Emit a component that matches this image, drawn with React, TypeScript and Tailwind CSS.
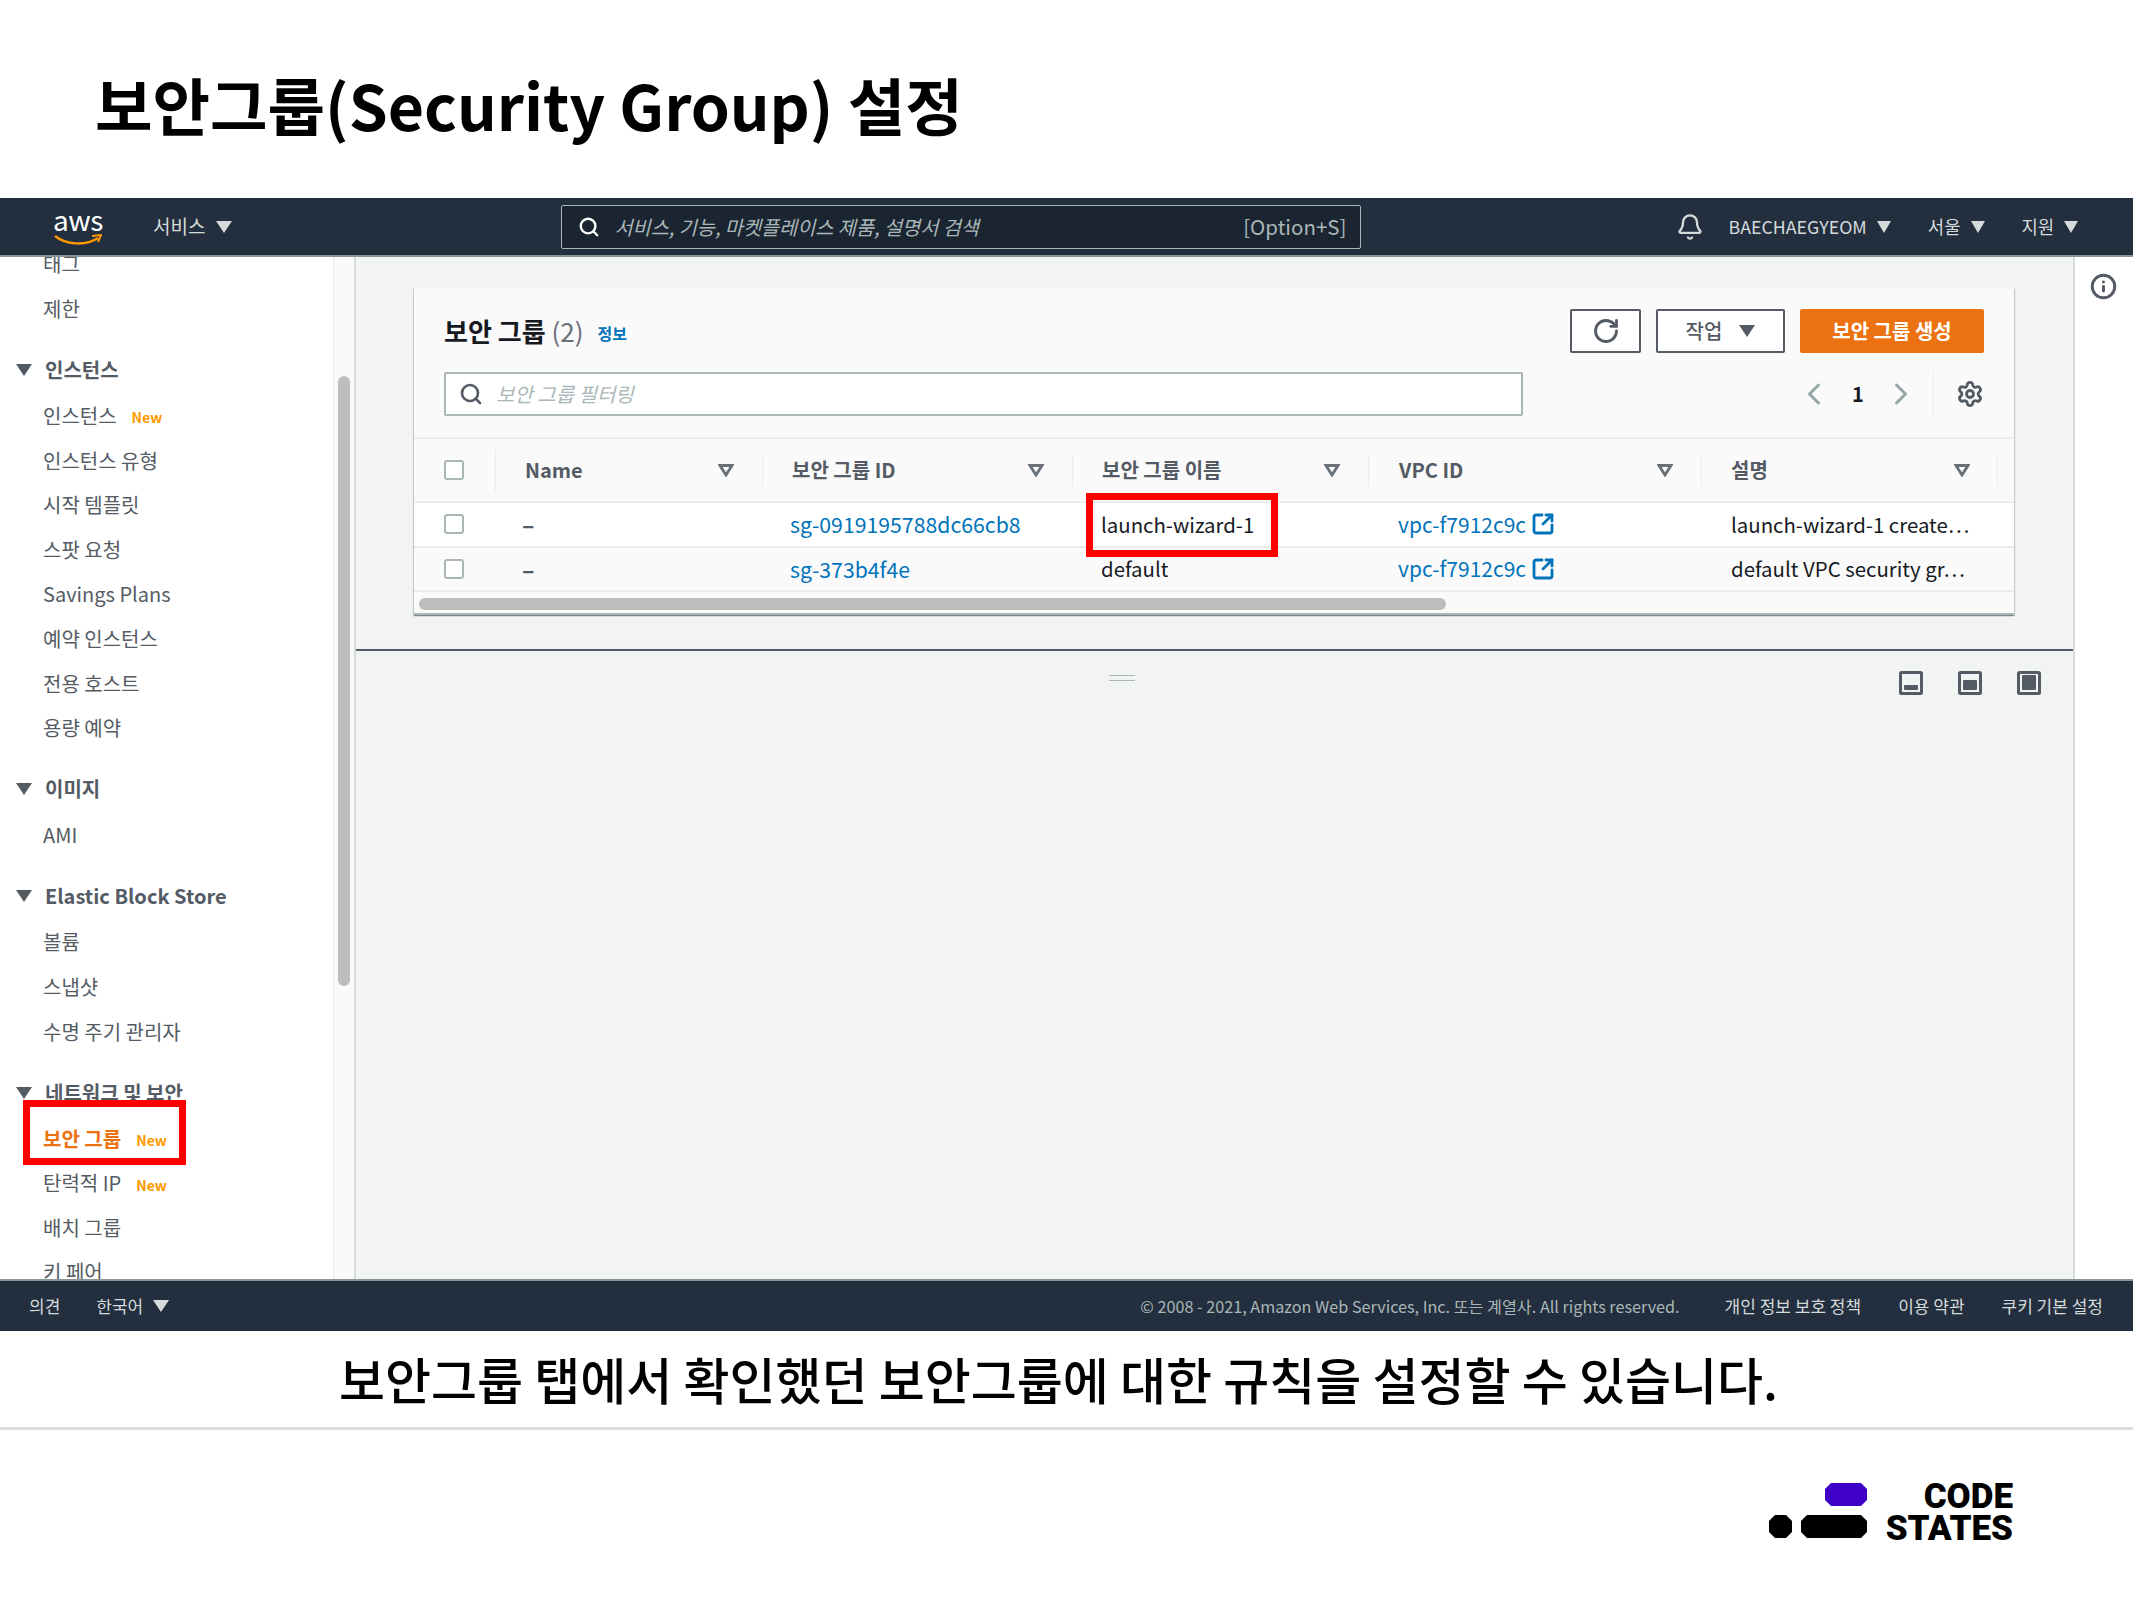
import { Bell, ChevronLeft, ChevronRight, Info, RotateCw, Search, Settings, SquareArrowOutUpRight } from "lucide-react";

const FONT = "font-['Noto_Sans_CJK_KR','Noto_Sans',sans-serif]";

// Solid caret used in the top bar, footer and sidebar
function Caret({ className }: { className?: string }) {
  return (
    <svg width="16" height="12" viewBox="0 0 16 12" preserveAspectRatio="none" className={className}>
      <polygon points="0,0 16,0 8,12" fill="currentColor" />
    </svg>
  );
}

// Outlined sort/filter triangle of the table header
function SortCaret() {
  return (
    <svg width="16" height="13" viewBox="0 0 16 13" className="text-[#687078]">
      <polygon points="2,1.5 14,1.5 8,11" fill="none" stroke="currentColor" strokeWidth="2.8" />
    </svg>
  );
}

function PanelIcon({ fill }: { fill: "low" | "mid" | "full" }) {
  const y = fill === "low" ? 14 : fill === "mid" ? 9 : 4;
  return (
    <svg width="24" height="24" viewBox="0 0 24 24" className="text-[#545b64]">
      <rect x="1.5" y="1.5" width="21" height="21" rx="1" fill="none" stroke="currentColor" strokeWidth="3" />
      <rect x="5" y={y} width="14" height={19 - y} rx="1" fill="currentColor" />
    </svg>
  );
}

function NavItem({ label, isNew, active }: { label: string; isNew?: boolean; active?: boolean }) {
  return (
    <div className={`h-[44.6px] flex items-center pl-[43px] text-[20px] ${active ? "text-[#ec7211] font-bold" : "text-[#545b64]"}`}>
      <span>{label}</span>
      {isNew && <span className="ml-[15px] mt-[4px] text-[14px] font-bold text-[#ff9900]">New</span>}
    </div>
  );
}

function NavHeader({ label }: { label: string }) {
  return (
    <div className="mt-[15px] h-[47.5px] flex items-center pl-[16px] gap-[13px] text-[20px] font-bold text-[#545b64]">
      <Caret />
      <span>{label}</span>
    </div>
  );
}

const COLUMNS = [
  { label: "Name", width: "w-[267px]", pad: "pl-[29px]", sort: "pr-[28px]" },
  { label: "보안 그룹 ID", width: "w-[310px]", pad: "pl-[29px]", sort: "pr-[28px]" },
  { label: "보안 그룹 이름", width: "w-[296px]", pad: "pl-[29px]", sort: "pr-[28px]" },
  { label: "VPC ID", width: "w-[333px]", pad: "pl-[30px]", sort: "pr-[28px]" },
  { label: "설명", width: "w-[296px]", pad: "pl-[29px]", sort: "pr-[27px]" },
];

const ROWS = [
  { id: "sg-0919195788dc66cb8", name: "launch-wizard-1", desc: "launch-wizard-1 create…", bg: "bg-white" },
  { id: "sg-373b4f4e", name: "default", desc: "default VPC security gr…", bg: "bg-[#fafafa]" },
];

function Checkbox() {
  return <div className="w-[20px] h-[20px] rounded-[3px] border-2 border-[#aab7b8] bg-white" />;
}

export default function App() {
  return (
    <div className={`relative w-[2133px] h-[1600px] bg-white flex flex-col overflow-hidden ${FONT}`}>
      {/* Slide title */}
      <div className="h-[198px] shrink-0 flex items-center pl-[95px] pt-[11px]">
        <h1 className="text-[62.5px] font-bold text-black leading-none">보안그룹(Security Group) 설정</h1>
      </div>

      {/* Console screenshot */}
      <div className="h-[1133px] shrink-0 flex flex-col">
        <header className="h-[59px] shrink-0 bg-[#232f3e] border-b-2 border-[#879596] flex items-center text-[#d5dbdb] text-[19px]">
          <div className="ml-[54px] w-[48px] h-[46px] flex flex-col items-center leading-none">
            <span className="text-[28px] text-white leading-[30px] tracking-[-0.5px]">aws</span>
            <svg width="48" height="12" viewBox="0 0 48 12">
              <path d="M1 2 C12 11 32 12 44 4" fill="none" stroke="#ff9900" strokeWidth="2.4" />
              <path d="M38 2 L47 1 L44 8" fill="none" stroke="#ff9900" strokeWidth="2" />
            </svg>
          </div>
          <span className="ml-[51px]">서비스</span>
          <Caret className="ml-[11px]" />
          <div className="ml-[329px] w-[800px] h-[44px] bg-[#1b2531] border border-[#aab7b8] rounded-[2px] flex items-center pl-[16px] pr-[14px]">
            <Search size={22} strokeWidth={2.6} className="text-white" />
            <span className="ml-[14px] italic text-[19.7px] text-[#aab7b8]">서비스, 기능, 마켓플레이스 제품, 설명서 검색</span>
            <span className="ml-auto text-[20.5px] text-[#aab7b8]">[Option+S]</span>
          </div>
          <Bell size={28} strokeWidth={2} className="ml-[315px]" />
          <span className="ml-[24px] text-[17.8px]">BAECHAEGYEOM</span>
          <Caret className="ml-[10px] w-[14px]" />
          <span className="ml-[37px] text-[17.8px]">서울</span>
          <Caret className="ml-[10px] w-[14px]" />
          <span className="ml-[37px] text-[17.8px]">지원</span>
          <Caret className="ml-[10px] w-[14px]" />
        </header>

        <div className="flex-1 min-h-0 flex overflow-hidden">
          {/* Sidebar */}
          <aside className="w-[333px] shrink-0 bg-white overflow-hidden">
            <div className="-mt-[15px]">
              <NavItem label="태그" />
              <NavItem label="제한" />
              <NavHeader label="인스턴스" />
              <NavItem label="인스턴스" isNew />
              <NavItem label="인스턴스 유형" />
              <NavItem label="시작 템플릿" />
              <NavItem label="스팟 요청" />
              <NavItem label="Savings Plans" />
              <NavItem label="예약 인스턴스" />
              <NavItem label="전용 호스트" />
              <NavItem label="용량 예약" />
              <NavHeader label="이미지" />
              <NavItem label="AMI" />
              <NavHeader label="Elastic Block Store" />
              <NavItem label="볼륨" />
              <NavItem label="스냅샷" />
              <NavItem label="수명 주기 관리자" />
              <NavHeader label="네트워크 및 보안" />
              <NavItem label="보안 그룹" isNew active />
              <NavItem label="탄력적 IP" isNew />
              <NavItem label="배치 그룹" />
              <NavItem label="키 페어" />
            </div>
          </aside>
          <div className="w-[23px] shrink-0 bg-[#fafafa] border-l border-r-2 border-l-[#eaeded] border-r-[#d5dbdb] pt-[119px] pl-[4px]">
            <div className="w-[12px] h-[610px] rounded-full bg-[#bdbdbd]" />
          </div>

          {/* Main content */}
          <main className="flex-1 min-w-0 bg-[#f2f3f3] flex flex-col">
            <div className="h-[394px] shrink-0 pt-[31px] pl-[58px] border-b-2 border-[#545b64]">
              <section className="w-[1600px] h-[327px] bg-[#fafafa] shadow-[0_1px_1px_0_rgba(0,28,36,0.3),1px_1px_1px_0_rgba(0,28,36,0.15),-1px_1px_1px_0_rgba(0,28,36,0.15)] border-b-2 border-[#aab7b8]">
                <div className="h-[84px] flex items-start pl-[30px] pr-[30px] pt-[21px]">
                  <h2 className="text-[26px] font-bold text-[#16191f] leading-[36px] mt-[4px]">
                    보안 그룹 <span className="font-normal text-[#687078]">(2)</span>
                  </h2>
                  <span className="ml-[14px] mt-[12px] text-[16px] font-bold text-[#0073bb]">정보</span>
                  <button className="ml-auto w-[71px] h-[44px] flex items-center justify-center bg-white border-2 border-[#545b64] rounded-[2px] text-[#545b64]">
                    <RotateCw size={28} strokeWidth={2.4} />
                  </button>
                  <button className="ml-[15px] w-[129px] h-[44px] flex items-center justify-center gap-[17px] bg-white border-2 border-[#545b64] rounded-[2px] text-[20px] font-medium text-[#545b64]">
                    작업
                    <Caret />
                  </button>
                  <button className="ml-[15px] w-[184px] h-[44px] flex items-center justify-center bg-[#ec7211] rounded-[2px] text-[20px] font-bold text-white">
                    보안 그룹 생성
                  </button>
                </div>
                <div className="h-[67px] flex items-start pl-[30px] border-b-2 border-[#eaeded]">
                  <div className="w-[1079px] h-[44px] bg-white border-2 border-[#aab7b8] rounded-[2px] flex items-center pl-[13px] gap-[13px]">
                    <Search size={24} strokeWidth={2.6} className="text-[#545b64]" />
                    <span className="italic text-[20px] text-[#aab7b8]">보안 그룹 필터링</span>
                  </div>
                  <div className="ml-[273px] h-[44px] flex items-center text-[#95a5a6]">
                    <ChevronLeft size={36} strokeWidth={2} />
                    <span className="ml-[16px] w-[20px] text-center text-[20px] font-bold text-[#16191f]">1</span>
                    <ChevronRight size={36} strokeWidth={2} className="ml-[15px]" />
                    <div className="ml-[14px] w-px h-[44px] bg-[#eaeded]" />
                    <Settings size={28} strokeWidth={2.4} className="ml-[22px] text-[#545b64]" />
                  </div>
                </div>

                {/* Table */}
                <div className="h-[64px] flex items-center border-b-2 border-[#eaeded]">
                  <div className="w-[82px] shrink-0 h-[42px] pl-[30px] flex items-center border-r border-[#eaeded]">
                    <Checkbox />
                  </div>
                  {COLUMNS.map((col) => (
                    <div
                      key={col.label}
                      className={`${col.width} shrink-0 h-[32px] flex items-center justify-between ${col.pad} ${col.sort} border-r border-[#eaeded] text-[20px] font-bold text-[#545b64]`}
                    >
                      <span>{col.label}</span>
                      <SortCaret />
                    </div>
                  ))}
                </div>
                {ROWS.map((row) => (
                  <div key={row.id} className={`h-[44.5px] flex items-center border-b-2 border-[#eaeded] text-[20.4px] text-[#16191f] ${row.bg}`}>
                    <div className="w-[82px] shrink-0 pl-[30px]">
                      <Checkbox />
                    </div>
                    <div className="w-[267px] shrink-0 pl-[26px] font-bold text-[23px] text-[#545b64]">–</div>
                    <div className="w-[310px] shrink-0 pl-[27px] text-[21.25px] text-[#0073bb]">{row.id}</div>
                    <div className="w-[296px] shrink-0 pl-[28px]">{row.name}</div>
                    <div className="w-[333px] shrink-0 pl-[29px] flex items-center gap-[5px] text-[21px] text-[#0073bb]">
                      vpc-f7912c9c
                      <SquareArrowOutUpRight size={24} strokeWidth={2.8} />
                    </div>
                    <div className="pl-[29px]">{row.desc}</div>
                  </div>
                ))}
                <div className="pt-[6px] pl-[5px]">
                  <div className="w-[1027px] h-[12px] rounded-full bg-[#bdbdbd]" />
                </div>
              </section>
            </div>

            {/* Split panel */}
            <div className="flex-1 flex flex-col">
              <div className="pt-[24px] pl-[753px]">
                <div className="w-[26px] h-[6px] border-y border-[#aab7b8]" />
              </div>
              <div className="flex justify-end gap-[35px] pr-[32px] mt-[-10px]">
                <PanelIcon fill="low" />
                <PanelIcon fill="mid" />
                <PanelIcon fill="full" />
              </div>
            </div>
          </main>

          {/* Right help rail */}
          <div className="w-[60px] shrink-0 bg-white border-l-2 border-[#d5dbdb] pt-[16px] pl-[15px]">
            <Info size={27} strokeWidth={2.6} className="text-[#545b64]" />
          </div>
        </div>

        <footer className="h-[52px] shrink-0 bg-[#232f3e] border-t-2 border-[#879596] flex items-center text-[17px] text-[#d5dbdb]">
          <span className="ml-[29px]">의견</span>
          <span className="ml-[36px]">한국어</span>
          <Caret className="ml-[10px]" />
          <span className="ml-auto text-[16.2px] text-[#aab7b8]">© 2008 - 2021, Amazon Web Services, Inc. 또는 계열사. All rights reserved.</span>
          <span className="ml-[45px]">개인 정보 보호 정책</span>
          <span className="ml-[37px]">이용 약관</span>
          <span className="ml-[37px] mr-[30px]">쿠키 기본 설정</span>
        </footer>
      </div>

      {/* Caption */}
      <div className="h-[99px] shrink-0 flex items-center justify-center border-b-[3px] border-[#dddddd] pb-[3px] pr-[16px]">
        <p className="text-[50px] font-medium text-black leading-none">보안그룹 탭에서 확인했던 보안그룹에 대한 규칙을 설정할 수 있습니다.</p>
      </div>

      {/* Logo */}
      <div className="flex-1 flex justify-end items-start gap-[19px] pt-[53px] pr-[120px]">
        <svg width="98" height="56" viewBox="0 0 98 56">
          <polygon points="62,0 92,0 98,6 98,17 92,23 62,23 56,17 56,6" fill="#3f00c8" />
          <polygon points="6,32 17,32 23,38 23,49 17,55 6,55 0,49 0,38" fill="#000" />
          <polygon points="38,32 92,32 98,38 98,49 92,55 38,55 32,49 32,38" fill="#000" />
        </svg>
        <div className="-mt-[2px] text-right font-['Roboto',sans-serif] font-black text-[35px] leading-[32px] text-black">
          <div>CODE</div>
          <div>STATES</div>
        </div>
      </div>

      {/* Red highlight boxes drawn over the screenshot */}
      <div className="absolute left-[23px] top-[1100px] w-[163px] h-[65px] border-[7px] border-[#ff0000]" />
      <div className="absolute left-[1086px] top-[493px] w-[192px] h-[64px] border-[7px] border-[#ff0000]" />
    </div>
  );
}
